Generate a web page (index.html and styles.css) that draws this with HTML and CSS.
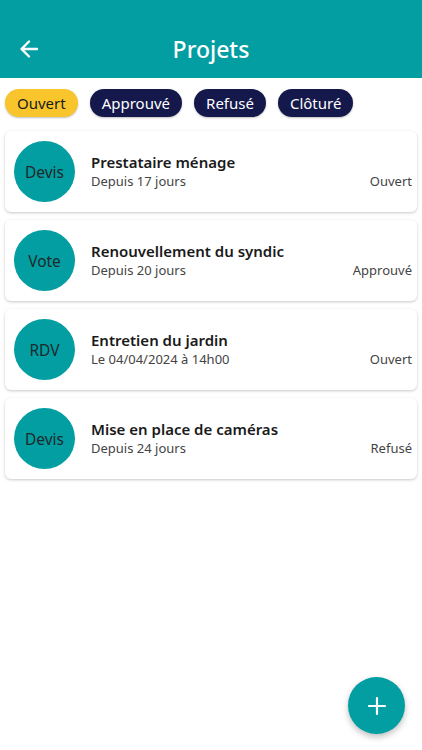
FILE: index.html
```html
<!DOCTYPE html>
<html lang="fr">
<head>
  <meta charset="UTF-8" />
  <meta name="viewport" content="width=device-width, initial-scale=1.0" />
  <title>Projets</title>
  <link rel="stylesheet" href="styles.css">
</head>
<body>
  <!-- Header -->
  <header class="topbar">
    <svg class="back" width="24" height="24" viewBox="0 0 24 24">
      <path d="M20 12H5M12 4.5L4.5 12L12 19.5" fill="none" stroke="#fff" stroke-width="2.4" stroke-linecap="round" stroke-linejoin="round"/>
    </svg>
    <h1>Projets</h1>
  </header>

  <!-- Filters -->
  <div class="filters">
    <span class="chip chip-active">Ouvert</span>
    <span class="chip">Approuvé</span>
    <span class="chip">Refusé</span>
    <span class="chip">Clôturé</span>
  </div>

  <!-- List -->
  <main class="list">
    <div class="card">
      <div class="avatar">Devis</div>
      <div class="info">
        <div class="title">Prestataire ménage</div>
        <div class="sub">Depuis 17 jours</div>
      </div>
      <div class="status">Ouvert</div>
    </div>
    <div class="card">
      <div class="avatar">Vote</div>
      <div class="info">
        <div class="title">Renouvellement du syndic</div>
        <div class="sub">Depuis 20 jours</div>
      </div>
      <div class="status">Approuvé</div>
    </div>
    <div class="card">
      <div class="avatar">RDV</div>
      <div class="info">
        <div class="title">Entretien du jardin</div>
        <div class="sub">Le 04/04/2024 à 14h00</div>
      </div>
      <div class="status">Ouvert</div>
    </div>
    <div class="card">
      <div class="avatar">Devis</div>
      <div class="info">
        <div class="title">Mise en place de caméras</div>
        <div class="sub">Depuis 24 jours</div>
      </div>
      <div class="status">Refusé</div>
    </div>
  </main>

  <!-- Add button -->
  <button class="fab">
    <svg width="20" height="20" viewBox="0 0 20 20">
      <path d="M10 2V18M2 10H18" stroke="#fff" stroke-width="2.2" stroke-linecap="round"/>
    </svg>
  </button>
</body>
</html>
```

FILE: styles.css
```css
body { margin: 0; font-family: "Noto Sans", Arial, sans-serif; background: #fff; color: #1a1a1a; }
.topbar {
  background: #029ea2;
  height: 78px;
  display: flex;
  align-items: flex-end;
  justify-content: center;
  position: relative;
  box-sizing: border-box;
  padding-bottom: 14px;
}
.topbar h1 { margin: 0; color: #fff; font-size: 23px; font-weight: 500; line-height: 30px; }
.back { position: absolute; left: 17px; bottom: 17px; }
.filters { display: flex; gap: 12px; padding: 11px 5px 0 5px; }
.chip {
  background: #14184a;
  color: #fff;
  font-size: 15px;
  height: 28px;
  line-height: 28px;
  padding: 0 12px;
  border-radius: 14px;
  box-shadow: 0 1px 2px rgba(0,0,0,0.25);
}
.chip-active { background: #f8c62c; color: #1a1a1a; }
.list { display: flex; flex-direction: column; gap: 8px; padding: 14px 5px 6px 5px; }
.card {
  display: flex;
  align-items: center;
  height: 81px;
  background: #fff;
  border-radius: 6px;
  box-shadow: 0 1px 3px rgba(0,0,0,0.22);
  padding: 0 5px 0 9px;
}
.avatar {
  width: 61px; height: 61px;
  border-radius: 50%;
  background: #029ea2;
  color: #1e2a2a;
  font-size: 15.5px;
  display: flex; align-items: center; justify-content: center;
  flex-shrink: 0;
}
.info { flex: 1; padding-left: 16px; margin-top: -2px; }
.title { font-size: 15px; font-weight: 600; line-height: 20px; }
.sub { font-size: 13px; color: #444; line-height: 16px; margin-top: 1px; }
.status { font-size: 13px; color: #444; align-self: center; margin-top: 18px; }
.fab {
  position: fixed;
  left: 348px; top: 677px;
  width: 57px; height: 57px;
  border-radius: 50%;
  border: none;
  background: #029ea2;
  box-shadow: 0 3px 6px rgba(0,0,0,0.25);
  display: flex; align-items: center; justify-content: center;
}
```
